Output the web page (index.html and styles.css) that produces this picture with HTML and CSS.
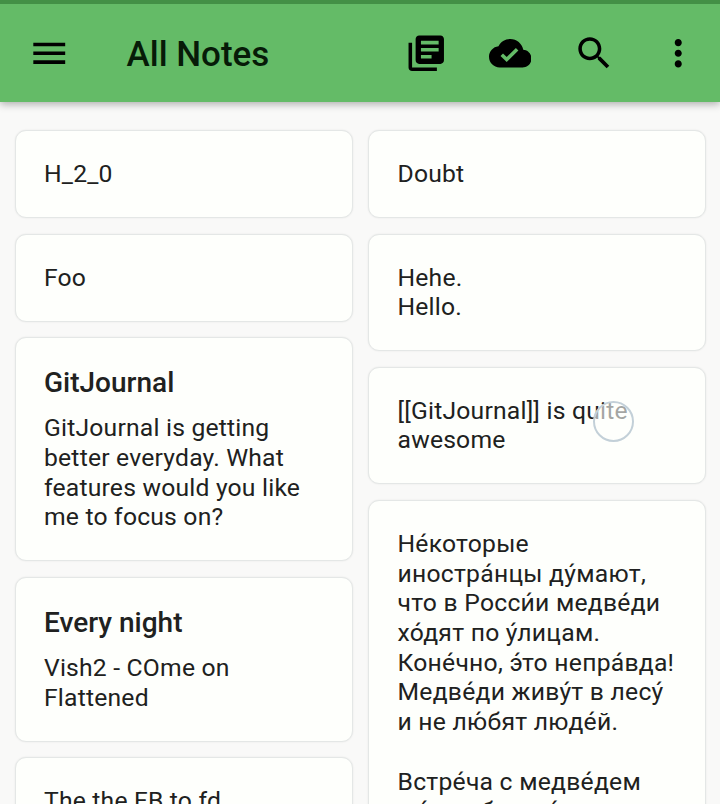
FILE: index.html
```html
<!DOCTYPE html>
<html lang="en">
<head>
<meta charset="utf-8">
<title>All Notes</title>
<link rel="stylesheet" href="styles.css">
</head>
<body>
<div class="app">
  <header class="appbar">
    <svg class="icon menu" viewBox="0 0 24 24"><path d="M3 18h18v-2H3v2zm0-5h18v-2H3v2zm0-7v2h18V6H3z"/></svg>
    <h1 class="appbar-title">All Notes</h1>
    <nav class="actions">
      <svg class="icon" viewBox="0 0 24 24"><path d="M4 6H2v14c0 1.100.9 2 2 2h14v-2H4V6zm16-4H8c-1.100 0-2 .9-2 2v12c0 1.100.9 2 2 2h12c1.100 0 2-.9 2-2V4c0-1.100-.9-2-2-2zm-1 9H9V9h10v2zm-4 4H9v-2h6v2zm4-8H9V5h10v2z"/></svg>
      <svg class="icon" viewBox="0 0 24 24"><path d="M19.350 10.040C18.670 6.590 15.640 4 12 4 9.110 4 6.600 5.640 5.350 8.040 2.340 8.360 0 10.910 0 14c0 3.310 2.690 6 6 6h13c2.760 0 5-2.240 5-5 0-2.640-2.050-4.780-4.650-4.960zM10 17l-3.500-3.500 1.410-1.410L10 14.170 15.180 9l1.410 1.410L10 17z"/></svg>
      <svg class="icon" viewBox="0 0 24 24"><path d="M15.500 14h-.79l-.28-.27C15.410 12.590 16 11.110 16 9.500 16 5.910 13.090 3 9.500 3S3 5.910 3 9.500 5.910 16 9.500 16c1.610 0 3.090-.59 4.230-1.570l.27.28v.79l5 4.990L20.490 19l-4.990-5zm-6 0C7.010 14 5 11.990 5 9.500S7.010 5 9.500 5 14 7.010 14 9.500 11.990 14 9.500 14z"/></svg>
      <svg class="icon" viewBox="0 0 24 24"><path d="M12 8c1.100 0 2-.9 2-2s-.9-2-2-2-2 .9-2 2 .9 2 2 2zm0 2c-1.100 0-2 .9-2 2s.9 2 2 2 2-.9 2-2-.9-2-2-2zm0 6c-1.100 0-2 .9-2 2s.9 2 2 2 2-.9 2-2-.9-2-2-2z"/></svg>
    </nav>
  </header>
  <main class="grid">
    <section class="column">
      <article class="card"><p>H_2_0</p></article>
      <article class="card"><p>Foo</p></article>
      <article class="card"><h2>GitJournal</h2><p>GitJournal is getting<br>better everyday. What<br>features would you like<br>me to focus on?</p></article>
      <article class="card"><h2>Every night</h2><p>Vish2 - COme on<br>Flattened</p></article>
      <article class="card"><p>The the FB to fd</p></article>
    </section>
    <section class="column">
      <article class="card"><p>Doubt</p></article>
      <article class="card"><p>Hehe.<br>Hello.</p></article>
      <article class="card touched"><p>[[GitJournal]] is quite<br>awesome</p><span class="touch"></span></article>
      <article class="card"><p lang="ru">Не́которые<br>иностра́нцы ду́мают,<br>что в Росси́и медве́ди<br>хо́дят по у́лицам.<br>Коне́чно, э́то непра́вда!<br>Медве́ди живу́т в лесу́<br>и не лю́бят люде́й.<br><br>Встре́ча с медве́дем<br>мо́жет быть о́чень</p></article>
    </section>
  </main>
</div>
</body>
</html>
```
FILE: styles.css
```css
* { box-sizing: border-box; }
body { margin: 0; background: #f9f9f8; font-family: Roboto, "Liberation Sans", sans-serif; }
.app { height: 804px; overflow: hidden; display: flex; flex-direction: column; }
.appbar {
  height: 102px;
  flex: none;
  display: flex;
  align-items: center;
  padding: 0 21px 0 28px;
  border-top: 4px solid #439046;
  background: #64bb67;
  box-shadow: 0 2px 8px rgba(0, 0, 0, .32);
}
.icon { width: 42.500px; height: 42.500px; fill: #000; display: block; flex: none; }
.appbar-title { margin: 4px 0 0 56px; font-size: 35px; font-weight: 500; letter-spacing: 0; color: #071b08; line-height: 42px; }
.actions { margin-left: auto; display: flex; gap: 41.500px; }
.grid { flex: none; display: grid; grid-template-columns: minmax(0, 1fr) minmax(0, 1fr); gap: 15.500px; padding: 28.300px 14px 0 14.500px; }
.column { display: flex; flex-direction: column; gap: 15.500px; }
.card {
  padding: 28px 28px 28.200px 28.500px;
  border: 1px solid #e4e7e6;
  border-radius: 11px;
  background: #fefffc;
  box-shadow: 0 0 2px rgba(0, 0, 0, .08);
  color: #202120;
}
.card h2 { margin: 0 0 12.800px; font-size: 28px; font-weight: 500; letter-spacing: 0; line-height: 34.500px; }
.card p { margin: 0; font-size: 24.700px; letter-spacing: .2px; line-height: 29.700px; white-space: nowrap; }
.card p:lang(ru) { letter-spacing: .25px; }
.touched { position: relative; }
.touch {
  position: absolute;
  left: 224px;
  top: 33px;
  width: 41px;
  height: 41px;
  border: 2px solid #c3d0d8;
  border-radius: 50%;
  background: rgba(254, 255, 252, .6);
}
```
